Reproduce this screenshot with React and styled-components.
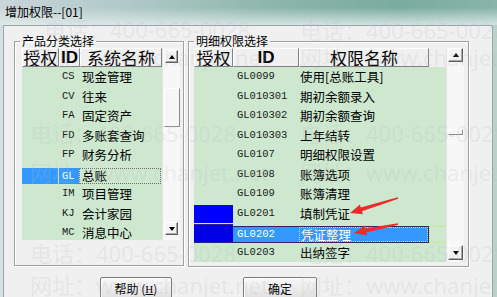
import React from "react";
import styled, { createGlobalStyle } from "styled-components";

const GlobalStyle = createGlobalStyle`
  html, body {
    margin: 0;
    padding: 0;
  }
  body {
    width: 497px;
    height: 297px;
    overflow: hidden;
    font-family: "Noto Sans CJK SC", "Noto Sans", sans-serif;
  }
`;

const GREEN = "#cde8cf";
const SEL = "#3399ff";

const Window = styled.div`
  position: relative;
  width: 497px;
  height: 297px;
  overflow: hidden;
  display: flex;
  flex-direction: column;
  background: linear-gradient(90deg, #d6e0e4, #c6d8d6 50%, #b9d3cb);
`;

const TitleBar = styled.div`
  height: 25px;
  flex: none;
  display: flex;
  align-items: center;
  padding-left: 5px;
  padding-bottom: 3px;
  box-sizing: border-box;
  font-size: 12px;
  color: #000;
  background: linear-gradient(
      180deg,
      rgba(255, 255, 255, 0) 30%,
      rgba(226, 236, 234, 0.85) 100%
    ),
    linear-gradient(90deg, #c9d5d9 0%, #b1c9c9 25%, #8cb6a9 55%, #7aac9d 80%, #88b5a8 100%);
`;

const Client = styled.div`
  flex: 1;
  margin: 0 4px 0 3px;
  background: #f0f0f0;
  border: 1px solid #97a7ac;
  border-bottom: none;
  display: flex;
  flex-direction: column;
`;

const Groups = styled.div`
  display: flex;
  gap: 4px;
  padding: 8px 0 0 10px;
`;

const Group = styled.fieldset`
  margin: 0;
  padding: 0 0 0 ${(p) => p.$pl}px;
  width: ${(p) => p.$w}px;
  height: ${(p) => p.$h}px;
  box-sizing: border-box;
  min-width: 0;
  border: 1px solid #a0a0a0;
  box-shadow: inset 1px 1px #fff, 1px 1px #fff;
`;

const Legend = styled.legend`
  padding: 0 2px;
  margin-left: ${(p) => p.$ml}px;
  font-size: 12px;
  line-height: 14px;
  height: 14px;
  color: #000;
`;

const List = styled.div`
  display: flex;
  width: ${(p) => p.$w}px;
  height: ${(p) => p.$h}px;
`;

const Pane = styled.div`
  flex: 1;
  display: flex;
  flex-direction: column;
  overflow: hidden;
`;

const Header = styled.div`
  display: flex;
  height: 19px;
  flex: none;
`;

const HeadCell = styled.div`
  width: ${(p) => p.$w}px;
  height: 19px;
  box-sizing: border-box;
  border-style: solid;
  border-width: 1px;
  border-color: #fff #808080 #808080 #fff;
  background: #f0f0f0;
  font-size: 17px;
  line-height: 17px;
  text-align: center;
  color: #000;
  white-space: nowrap;
  overflow: hidden;
  font-family: ${(p) =>
    p.$latin ? '"Liberation Sans", Arial, sans-serif' : '"Noto Sans CJK SC", sans-serif'};
  font-weight: ${(p) => (p.$latin ? 700 : 400)};
`;

const Body = styled.div`
  flex: 1;
  background: ${GREEN};
  overflow: hidden;
`;

const Row = styled.div`
  display: flex;
  height: 19.5px;
`;

const Mark = styled.div`
  width: ${(p) => p.$w}px;
  flex: none;
  box-sizing: border-box;
  margin: ${(p) => (p.$tall ? "1px 0 0" : "3px 0 0")};
  height: ${(p) => (p.$tall ? "18.5px" : "16px")};
  background: ${(p) => p.$bg || "transparent"};
  border-top: ${(p) => (p.$edge ? "1px solid #30207a" : "none")};
  border-bottom: ${(p) => (p.$edge ? "1px solid #30207a" : "none")};
`;

const IdCell = styled.div`
  width: ${(p) => p.$w}px;
  flex: none;
  box-sizing: border-box;
  padding-left: ${(p) => p.$pl}px;
  font-family: "Liberation Mono", "DejaVu Sans Mono", monospace;
  font-size: 10.5px;
  line-height: 19.5px;
  color: #1a1a1a;
  white-space: nowrap;
  overflow: hidden;
`;

const NameCell = styled.div`
  width: ${(p) => p.$w}px;
  flex: none;
  box-sizing: border-box;
  padding-left: ${(p) => p.$pl}px;
  font-size: 12.5px;
  line-height: 19.5px;
  color: #000;
  white-space: nowrap;
  overflow: hidden;
`;

const SelBlock = styled.div`
  display: flex;
  margin-top: 3px;
  height: 17px;
  box-sizing: border-box;
  background: ${SEL};
  border: 1px solid #3a1f66;
  border-left: none;
  ${IdCell} {
    color: #fff;
    line-height: 15px;
  }
`;

const Focus = styled.div`
  flex: none;
  width: ${(p) => p.$w}px;
  box-sizing: border-box;
  margin-top: ${(p) => p.$mt}px;
  height: ${(p) => p.$h}px;
  border: 1px dotted ${(p) => p.$c};
  padding-left: ${(p) => p.$pl || 0}px;
  font-size: 12.5px;
  line-height: ${(p) => p.$h - 2}px;
  color: ${(p) => (p.$light ? "#fff" : "#000")};
  white-space: nowrap;
`;

const LeftSelCell = styled.div`
  flex: none;
  width: ${(p) => p.$w}px;
  margin-top: 3px;
  height: 16px;
  background: ${SEL};
  border-left: ${(p) => (p.$sep ? "1px solid #c8dcef" : "none")};
  box-sizing: border-box;
  padding-left: ${(p) => p.$pl || 0}px;
  font-family: "Liberation Mono", "DejaVu Sans Mono", monospace;
  font-size: 10.5px;
  line-height: 16px;
  color: #fff;
`;

const ScrollBar = styled.div`
  width: 18px;
  flex: none;
  box-sizing: border-box;
  background: #f7f7f7;
  border-left: 1px solid #e4e4e4;
  display: flex;
  flex-direction: column;
  align-items: center;
`;

const ScrollBtn = styled.div`
  width: ${(p) => p.$w}px;
  height: ${(p) => p.$h}px;
  flex: none;
  box-sizing: border-box;
  margin-top: ${(p) => p.$mt || 0}px;
  margin-bottom: ${(p) => p.$mb || 0}px;
  background: #f4f4f4;
  border-style: solid;
  border-width: 1px;
  border-color: #fff #5a5a5a #5a5a5a #fff;
  box-shadow: inset -1px -1px #a8a8a8;
  display: flex;
  align-items: center;
  justify-content: center;
`;

const Tri = styled.span`
  width: 0;
  height: 0;
  border-left: 3.5px solid transparent;
  border-right: 3.5px solid transparent;
  ${(p) => (p.$down ? "border-top: 4px solid #000;" : "border-bottom: 4px solid #000;")}
`;

const Thumb = styled.div`
  width: ${(p) => p.$w}px;
  height: ${(p) => p.$h}px;
  flex: none;
  box-sizing: border-box;
  margin-top: ${(p) => p.$mt}px;
  background: #f6f6f6;
  border-style: solid;
  border-width: 1px;
  border-color: #fff #8a8a8a #8a8a8a #fff;
`;

const Spacer = styled.div`
  flex: 1;
`;

const Buttons = styled.div`
  display: flex;
  gap: 71px;
  padding: 10px 0 0 96px;
`;

const Button = styled.div`
  width: ${(p) => p.$w}px;
  height: 23px;
  box-sizing: border-box;
  border: 1px solid #7a7a7a;
  border-radius: 2px;
  background: linear-gradient(180deg, #f7f7f7 0%, #ececec 50%, #dedede 100%);
  box-shadow: inset 1px 1px #fff;
  display: flex;
  align-items: center;
  justify-content: center;
  font-size: 12px;
  color: #000;
`;

const Key = styled.span`
  font-family: "Liberation Serif", serif;
  font-size: 11px;
  text-decoration: underline;
`;

const Watermarks = styled.div`
  position: absolute;
  inset: 0;
  pointer-events: none;
`;

const WMark = styled.div`
  position: absolute;
  white-space: nowrap;
  font-family: "Noto Sans", "Noto Sans CJK SC", sans-serif;
  font-size: 22px;
  line-height: 24px;
  color: rgba(185, 185, 185, 0.2);
`;

const Arrows = styled.svg`
  position: absolute;
  left: 0;
  top: 0;
  pointer-events: none;
`;

const leftRows = [
  { id: "CS", name: "现金管理" },
  { id: "CV", name: "往来" },
  { id: "FA", name: "固定资产" },
  { id: "FD", name: "多账套查询" },
  { id: "FP", name: "财务分析" },
  { id: "GL", name: "总账", sel: true },
  { id: "IM", name: "项目管理" },
  { id: "KJ", name: "会计家园" },
  { id: "MC", name: "消息中心" },
];

const rightRows = [
  { id: "GL0099", name: "使用[总账工具]" },
  { id: "GL010301", name: "期初余额录入" },
  { id: "GL010302", name: "期初余额查询" },
  { id: "GL010303", name: "上年结转" },
  { id: "GL0107", name: "明细权限设置" },
  { id: "GL0108", name: "账簿选项" },
  { id: "GL0109", name: "账簿清理" },
  { id: "GL0201", name: "填制凭证", granted: true },
  { id: "GL0202", name: "凭证整理", granted: true, sel: true },
  { id: "GL0203", name: "出纳签字" },
];

const marks = [
  { x: 44, y: 17, t: "电话：400-665-0028" },
  { x: 300, y: 18, t: "电话：400-665-0028" },
  { x: 30, y: 45, t: "网址：www.chanjet.net" },
  { x: 300, y: 45, t: "网址：www.chanjet.net" },
  { x: 30, y: 121, t: "电话：400-665-0028" },
  { x: 300, y: 121, t: "电话：400-665-0028" },
  { x: 30, y: 160, t: "网址：www.chanjet.net" },
  { x: 300, y: 160, t: "网址：www.chanjet.net" },
  { x: 30, y: 241, t: "电话：400-665-0028" },
  { x: 300, y: 241, t: "电话：400-665-0028" },
  { x: 30, y: 273, t: "网址：www.chanjet.net" },
  { x: 300, y: 273, t: "网址：www.chanjet.net" },
];

function LeftList() {
  return (
    <List $w={158} $h={192}>
      <Pane>
        <Header>
          <HeadCell $w={37}>授权</HeadCell>
          <HeadCell $w={21} $latin>ID</HeadCell>
          <HeadCell $w={82}>系统名称</HeadCell>
        </Header>
        <Body>
          {leftRows.map((r) =>
            r.sel ? (
              <Row key={r.id}>
                <LeftSelCell $w={36} />
                <LeftSelCell $w={21} $sep $pl={3}>
                  {r.id}
                </LeftSelCell>
                <Focus $w={82} $mt={3} $h={16} $c="#6f6f6f" $pl={2}>
                  {r.name}
                </Focus>
              </Row>
            ) : (
              <Row key={r.id}>
                <Mark $w={37} />
                <IdCell $w={21} $pl={3}>
                  {r.id}
                </IdCell>
                <NameCell $w={82} $pl={2}>
                  {r.name}
                </NameCell>
              </Row>
            )
          )}
        </Body>
      </Pane>
      <ScrollBar>
        <ScrollBtn $w={13} $h={13} $mt={2}>
          <Tri />
        </ScrollBtn>
        <Thumb $w={16} $h={39} $mt={25} />
        <Spacer />
        <ScrollBtn $w={13} $h={13} $mb={5}>
          <Tri $down />
        </ScrollBtn>
      </ScrollBar>
    </List>
  );
}

function RightList() {
  return (
    <List $w={270} $h={214}>
      <Pane>
        <Header>
          <HeadCell $w={39}>授权</HeadCell>
          <HeadCell $w={66} $latin>ID</HeadCell>
          <HeadCell $w={130}>权限名称</HeadCell>
        </Header>
        <Body>
          {rightRows.map((r) =>
            r.sel ? (
              <Row key={r.id}>
                <Mark $w={39} $bg="#0000e6" $tall $edge />
                <SelBlock>
                  <IdCell $w={66} $pl={4}>
                    {r.id}
                  </IdCell>
                  <Focus $w={129} $mt={0} $h={15} $c="#bcd9f7" $pl={1} $light>
                    {r.name}
                  </Focus>
                </SelBlock>
                <Focus $w={18} $mt={3} $h={17} $c="#c9e35a" />
              </Row>
            ) : (
              <Row key={r.id}>
                <Mark $w={39} $bg={r.granted ? "#0000ff" : undefined} $tall />
                <IdCell $w={66} $pl={4}>
                  {r.id}
                </IdCell>
                <NameCell $w={130} $pl={1}>
                  {r.name}
                </NameCell>
              </Row>
            )
          )}
        </Body>
      </Pane>
      <ScrollBar>
        <ScrollBtn $w={15} $h={14}>
          <Tri />
        </ScrollBtn>
        <Thumb $w={15} $h={6} $mt={67} />
        <Spacer />
        <ScrollBtn $w={15} $h={15} $mb={2}>
          <Tri $down />
        </ScrollBtn>
      </ScrollBar>
    </List>
  );
}

export default function App() {
  return (
    <>
      <GlobalStyle />
      <Window>
        <TitleBar>增加权限--[01]</TitleBar>
        <Client>
          <Groups>
            <Group $w={170} $h={232} $pl={7}>
              <Legend $ml={-2}>产品分类选择</Legend>
              <LeftList />
            </Group>
            <Group $w={281} $h={233} $pl={5}>
              <Legend $ml={0}>明细权限选择</Legend>
              <RightList />
            </Group>
          </Groups>
          <Buttons>
            <Button $w={72}>
              帮助&nbsp;(<Key>H</Key>)
            </Button>
            <Button $w={74}>确定</Button>
          </Buttons>
        </Client>
        <Watermarks>
          {marks.map((m, i) => (
            <WMark key={i} style={{ left: m.x, top: m.y }}>
              {m.t}
            </WMark>
          ))}
        </Watermarks>
        <Arrows width="497" height="297" viewBox="0 0 497 297">
          <polygon
            fill="#ee2a2a"
            points="350,213 359.9,204.6 360.8,207.5 397.8,197.2 398.2,198.8 362,211.3 362.9,214.2"
          />
          <polygon
            fill="#ee2a2a"
            points="354,233 364.8,225.7 365.4,228.6 397.8,223.2 398.2,224.8 366.2,232.6 366.8,235.5"
          />
        </Arrows>
      </Window>
    </>
  );
}
